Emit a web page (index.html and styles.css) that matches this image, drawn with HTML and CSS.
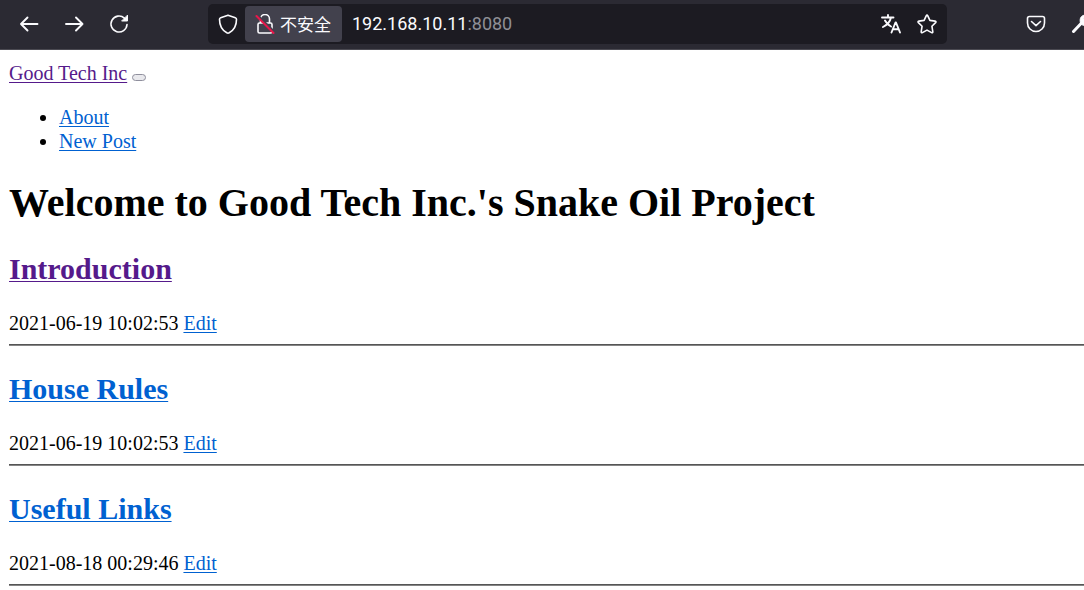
FILE: index.html
```html
<!DOCTYPE html>
<html lang="en">
<head>
<meta charset="utf-8">
<title>Good Tech Inc</title>
<link rel="stylesheet" href="styles.css">
</head>
<body>
<header class="toolbar">
  <div class="nav-buttons">
    <button class="icon-button" type="button" aria-label="Back"><svg class="icon bold" viewBox="0 0 20 20"><path d="M18.500 10H2M8.500 3.500L2 10l6.500 6.500"/></svg></button>
    <button class="icon-button" type="button" aria-label="Forward"><svg class="icon bold" viewBox="0 0 20 20"><path d="M2 10h16.500M12 3.500l6.500 6.500-6.500 6.500"/></svg></button>
    <button class="icon-button" type="button" aria-label="Reload"><svg class="icon" viewBox="0 0 20 20"><path d="M18 10.500a8 8 0 1 1-2.600-6.400L17 5.500"/><path class="solid" d="M18.500 1.500v5.500H13z"/></svg></button>
  </div>
  <div class="address-bar">
    <button class="icon-button shield" type="button" aria-label="Tracking protection"><svg class="icon" viewBox="0 0 20 20"><path d="M10 1.200l7.300 2.500c.9.300 1.200.8 1.200 1.600 0 5.800-2.200 10.800-7.300 13.500q-1.200.6-2.400 0C3.700 16.100 1.500 11.100 1.500 5.300c0-.8.3-1.300 1.200-1.600z"/></svg></button>
    <button class="security" type="button"><svg class="icon" viewBox="0 0 20 20"><path d="M5.500 9V5a4.500 4.500 0 0 1 9 0v4M4.500 9h11q1.500 0 1.500 1.500v7q0 1.500-1.500 1.500h-11Q3 19 3 17.500v-7Q3 9 4.500 9z"/><path class="gap" d="M3 1.500l17 17"/><path class="slash" d="M1.500 2l17 17"/></svg><span>不安全</span></button>
    <a class="address" href="#">192.168.10.11<span class="port">:8080</span></a>
    <button class="icon-button" type="button" aria-label="Translate"><svg class="icon bold" viewBox="0 0 20 20"><path d="M1 3.500h11.500M7 1v2.500M10 3.500C9 8 6 11 2 13M4 6.500c1.500 3 3.500 4.800 6 6M10.500 18.500l4-10h.5l4 10M12.200 15.200h5.300"/></svg></button>
    <button class="icon-button" type="button" aria-label="Bookmark"><svg class="icon" viewBox="0 0 20 20"><path d="M9.200 1.800q.8-1.500 1.600 0l2.100 4.600 5.200.7q1.500.4.500 1.500l-3.700 3.600.9 5.500q.1 1.500-1.200.9L10 16.100l-4.600 2.500q-1.300.6-1.200-.9l.9-5.500-3.700-3.600q-1-1.100.5-1.500l5.200-.7z"/></svg></button>
  </div>
  <div class="actions">
    <button class="icon-button" type="button" aria-label="Save to Pocket"><svg class="icon" viewBox="0 0 20 20"><path d="M3.500 2.500h13q2 0 2 2V9a8.500 8.500 0 0 1-17 0V4.500q0-2 2-2zM5.500 7.500L10 11.700l4.500-4.200"/></svg></button>
    <button class="icon-button" type="button" aria-label="Tools"><svg class="icon" viewBox="0 0 20 20"><path class="handle" d="M2.500 17.500L11 8.500"/><path class="solid" d="M9.500 9C8 4 10.500 1 15 1l-3 4 3 3 4-3c0 5-3 8-7.500 6z"/></svg></button>
  </div>
</header>
<main class="page">
  <nav>
    <a class="visited" href="#">Good Tech Inc</a>
    <button class="toggler" type="button" aria-label="Toggle navigation"></button>
    <ul class="menu">
      <li><a href="#">About</a></li>
      <li><a href="#">New Post</a></li>
    </ul>
  </nav>
  <h1 class="title">Welcome to Good Tech Inc.'s Snake Oil Project</h1>
  <article>
    <h2 class="post-title"><a class="visited" href="#">Introduction</a></h2>
    <span>2021-06-19 10:02:53</span> <a href="#">Edit</a>
    <hr class="rule">
  </article>
  <article>
    <h2 class="post-title"><a href="#">House Rules</a></h2>
    <span>2021-06-19 10:02:53</span> <a href="#">Edit</a>
    <hr class="rule">
  </article>
  <article>
    <h2 class="post-title"><a href="#">Useful Links</a></h2>
    <span>2021-08-18 00:29:46</span> <a href="#">Edit</a>
    <hr class="rule">
  </article>
</main>
</body>
</html>
```

FILE: styles.css
```css
* { box-sizing: border-box; }
body {
  margin: 0;
  background: #fff;
  color: #000;
  font: 20px/24px "Liberation Serif", "Times New Roman", serif;
  overflow: hidden;
}
.toolbar {
  display: flex;
  align-items: center;
  height: 50px;
  padding: 0 0 2px 9px;
  background: #2b2a33;
  border-bottom: 1px solid #4b4a52;
  overflow: hidden;
}
.nav-buttons { display: flex; gap: 5px; width: 199px; flex: none; }
.icon-button {
  display: flex;
  align-items: center;
  justify-content: center;
  flex: none;
  width: 40px;
  height: 36px;
  padding: 0;
  border: 0;
  background: none;
}
.icon {
  display: block;
  flex: none;
  width: 20px;
  height: 20px;
  fill: none;
  stroke: #fbfbfe;
  stroke-width: 1.6;
  stroke-linecap: round;
  stroke-linejoin: round;
}
.bold { stroke-width: 1.9; }
.icon .solid { fill: #fbfbfe; stroke-width: 1; }
.icon .handle { stroke-width: 3; }
.icon .gap { stroke: #42414d; stroke-width: 2; }
.icon .slash { stroke: #e8174b; stroke-width: 2; }
.address-bar {
  display: flex;
  align-items: center;
  flex: 1;
  height: 40px;
  border-radius: 5px;
  background: #1c1b22;
}
.address-bar .icon-button { width: 36px; }
.address-bar .shield { width: 37px; padding-left: 3px; }
.security {
  display: flex;
  align-items: center;
  gap: 5px;
  height: 36px;
  padding: 0 11px 0 10px;
  border: 0;
  border-radius: 4px;
  background: #42414d;
  color: #fbfbfe;
  font: 17px/24px "Noto Sans CJK SC", sans-serif;
}
.address {
  flex: 1;
  padding-left: 10px;
  color: #fbfbfe;
  font: 18px/24px Roboto, "Noto Sans", sans-serif;
  text-decoration: none;
}
.port { color: #8f8f96; }
.address-bar .icon-button:last-child { margin-right: 2px; }
.actions { display: flex; gap: 5px; flex: none; width: 137px; padding-left: 69px; }
.page { padding: 11px 0 0 9px; }
a { color: #0061d1; text-decoration-thickness: 1px; text-underline-offset: 2px; }
.visited { color: #551a8b; }
.toggler {
  width: 14px;
  height: 7px;
  padding: 0;
  border: 1px solid #8f8f9d;
  border-radius: 4px;
  background: #e9e9ed;
}
.menu { margin: 20px 0 27px; padding-left: 50px; }
.title { margin: 0; font-size: 40px; line-height: 45px; }
.post-title { margin: 26px 0 25px; font-size: 30px; line-height: 34px; }
.title + article .post-title { margin-top: 27px; }
.rule {
  height: 2px;
  margin: 9px 0 0;
  border: 0;
  border-top: 1px solid #555;
  background: #858585;
}
```
